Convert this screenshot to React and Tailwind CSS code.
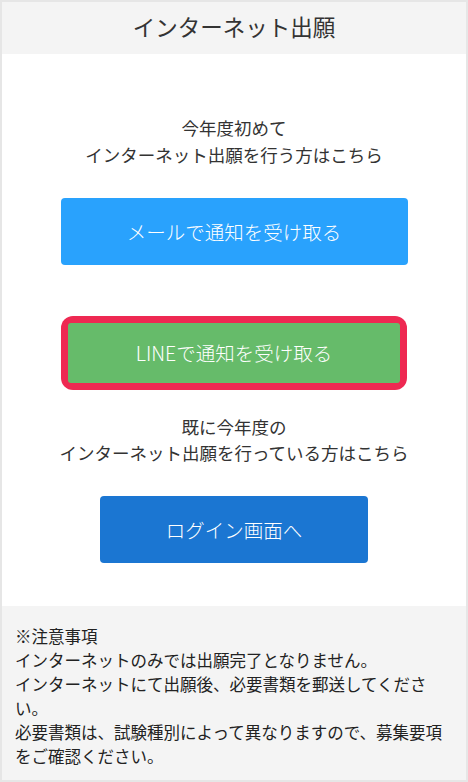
import React from 'react';

const font = { fontFamily: '"Noto Sans CJK JP", "Noto Sans", sans-serif' };

export default function App() {
  return (
    <div className="flex h-[782px] w-[468px] flex-col border-2 border-[#e6e6e6] bg-white text-[#333]" style={font}>
      <header className="flex h-[52px] shrink-0 items-center justify-center bg-[#f4f4f4] pb-[3px] text-[22.5px]">
        インターネット出願
      </header>

      <main className="flex flex-1 flex-col items-center pt-[60px]">
        <p className="text-center text-[17.5px] leading-[27px]">
          今年度初めて
          <br />
          インターネット出願を行う方はこちら
        </p>

        <button className="mt-[30px] h-[67px] w-[347px] rounded-[4px] bg-[#29a2fd] text-[19.5px] font-light text-white">
          メールで通知を受け取る
        </button>

        <div className="mt-[51px] rounded-[12px] bg-[#ee2952] p-[7px]">
          <button className="h-[60px] w-[332px] rounded-[3px] bg-[#66bb6a] text-[19.5px] font-light text-white">
            LINEで通知を受け取る
          </button>
        </div>

        <p className="mt-[24px] text-center text-[17.5px] leading-[26px]">
          既に今年度の
          <br />
          インターネット出願を行っている方はこちら
        </p>

        <button className="mt-[30px] h-[67px] w-[268px] rounded-[4px] bg-[#1b76d2] text-[19.5px] font-light text-white">
          ログイン画面へ
        </button>
      </main>

      <footer className="h-[174px] shrink-0 bg-[#f4f4f4] px-[13px] pt-[18px] text-[16.5px] leading-[24px] text-[#222]">
        <p>※注意事項</p>
        <p>インターネットのみでは出願完了となりません。</p>
        <p>インターネットにて出願後、必要書類を郵送してください。</p>
        <p>必要書類は、試験種別によって異なりますので、募集要項をご確認ください。</p>
      </footer>
    </div>
  );
}
